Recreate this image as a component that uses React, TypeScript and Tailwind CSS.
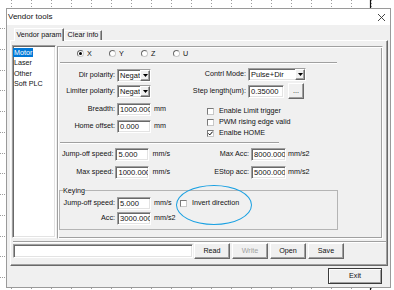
import React from 'react';

const sunken =
  'bg-white border border-t-[#a0a0a0] border-l-[#a0a0a0] border-r-white border-b-white shadow-[inset_1px_1px_0_#696969,inset_-1px_-1px_0_#e3e3e3]';
const raised =
  'bg-[#f0f0f0] border border-t-white border-l-white border-r-[#696969] border-b-[#696969] shadow-[inset_-1px_-1px_0_#a0a0a0]';

const Ruler = () => {
  const top = Array.from({ length: 19 }, (_, i) => 11 + i * 20);
  const left = Array.from({ length: 13 }, (_, i) => 28 + i * 20.75);
  return (
    <svg className="absolute inset-0 pointer-events-none" width="394" height="290">
      {top.map((x) => (
        <line key={'t' + x} x1={x + 0.5} y1="0" x2={x + 0.5} y2="7" stroke="#9c9c9c" strokeDasharray="1 2" />
      ))}
      {top.map((x) => (
        <line key={'b' + x} x1={x + 0.5} y1="288" x2={x + 0.5} y2="290" stroke="#9c9c9c" strokeDasharray="1 1" />
      ))}
      {left.map((y) => (
        <line key={'l' + y} x1="0" y1={Math.round(y) + 0.5} x2="5" y2={Math.round(y) + 0.5} stroke="#9c9c9c" strokeDasharray="1 1" />
      ))}
      <line x1="370.5" y1="0" x2="370.5" y2="8" stroke="#111" strokeWidth="1.2" />
      <line x1="370.5" y1="287" x2="370.5" y2="290" stroke="#111" strokeWidth="1.2" />
    </svg>
  );
};

const Arrow = () => (
  <svg width="5" height="3" viewBox="0 0 5 3">
    <path d="M0 0 L5 0 L2.5 3 Z" fill="#000" />
  </svg>
);

const Combo = ({ value, w }: { value: string; w: string }) => (
  <div className={`flex h-[13px] ${w} ${sunken}`}>
    <span className="flex-1 overflow-hidden whitespace-nowrap pl-[2px] leading-[11px] text-[7.5px]">{value}</span>
    <span className={`w-[10px] h-full flex items-center justify-center ${raised}`}>
      <Arrow />
    </span>
  </div>
);

const Field = ({ value, w = 'w-[34px]' }: { value: string; w?: string }) => (
  <div className={`h-[13px] ${w} ${sunken} overflow-hidden whitespace-nowrap pl-[2px] leading-[11px] text-[7.6px]`}>{value}</div>
);

const Check = ({ checked = false }: { checked?: boolean }) => (
  <span className="w-[7px] h-[7px] flex items-center justify-center bg-white border border-t-[#7a7a7a] border-l-[#7a7a7a] border-r-[#c8c8c8] border-b-[#c8c8c8]">
    {checked && (
      <svg width="5" height="5" viewBox="0 0 5 5">
        <path d="M0.3 2.4 L1.8 3.9 L4.7 0.6" stroke="#000" strokeWidth="1" fill="none" />
      </svg>
    )}
  </span>
);

const Radio = ({ label, checked = false }: { label: string; checked?: boolean }) => (
  <div className="w-[32px] flex items-center">
    <span className="w-[7px] h-[7px] rounded-full bg-white border border-t-[#6a6a6a] border-l-[#6a6a6a] border-r-[#c8c8c8] border-b-[#c8c8c8] flex items-center justify-center">
      {checked && <span className="w-[3px] h-[3px] rounded-full bg-black" />}
    </span>
    <span className="ml-[3px]">{label}</span>
  </div>
);

const Btn = ({ label, disabled = false, w = 'w-[36px]' }: { label: string; disabled?: boolean; w?: string }) => (
  <div className={`h-[16px] ${w} ${raised} flex items-center justify-center ${disabled ? 'text-[#a0a0a0]' : ''}`}>{label}</div>
);

const Etched = ({ w }: { w: string }) => (
  <div className={`ml-[2px] ${w} h-[2px] border-t border-t-[#a0a0a0] border-b border-b-white`} />
);

export default function App() {
  return (
    <div className="relative w-[394px] h-[290px] overflow-hidden bg-white font-['Liberation_Sans',Arial,sans-serif] text-[7.2px] text-[#111]">
      <Ruler />
      <div className="relative pt-[8px] pl-[6px]">
        <div className="w-[385px] h-[280px] flex flex-col bg-[#f0f0f0] border border-[#9a9a9a]">
          {/* title bar */}
          <div className="h-[16px] shrink-0 bg-white flex items-center justify-between pl-[1px] pr-[5px]">
            <span className="text-[8px]">Vendor tools</span>
            <svg width="7" height="7" viewBox="0 0 7 7">
              <path d="M0 0 L7 7 M7 0 L0 7" stroke="#333" strokeWidth="0.9" />
            </svg>
          </div>

          <div className="flex-1 flex flex-col pl-[3px] pr-[1px]">
            {/* tabs */}
            <div className="mt-[3px] h-[12px] flex items-end pl-[4px]">
              <div className="relative z-10 -mb-[1px] h-[13px] w-[50px] flex items-center justify-center bg-[#f0f0f0] border border-b-0 border-t-white border-l-white border-r-[#696969] shadow-[inset_-1px_0_0_#a0a0a0]">
                Vendor param
              </div>
              <div className="h-[10px] w-[38px] flex items-center justify-center bg-[#f0f0f0] border border-b-0 border-t-white border-l-white border-r-[#696969] shadow-[inset_-1px_0_0_#a0a0a0]">
                Clear info
              </div>
            </div>

            {/* tab panel */}
            <div className="h-[226px] w-[378px] flex flex-col border border-t-white border-l-white border-r-[#696969] border-b-[#696969] shadow-[inset_-1px_-1px_0_#a0a0a0]">
              <div className="flex items-start pt-[4px] pl-[1px]">
                {/* tree list */}
                <div className={`w-[44px] h-[193px] ${sunken} pt-[2px] pl-[0px] leading-[10.4px]`}>
                  <div>
                    <span className="bg-[#0078d7] text-white px-[1px]">Motor</span>
                  </div>
                  <div className="pl-[1px]">Laser</div>
                  <div className="pl-[1px]">Other</div>
                  <div className="pl-[1px]">Soft PLC</div>
                </div>

                {/* main group */}
                <div className="ml-[1px] mt-[1px] w-[326px] h-[193px] flex flex-col border border-t-[#a0a0a0] border-l-[#a0a0a0] border-r-white border-b-white shadow-[inset_1px_1px_0_#fff,inset_-1px_-1px_0_#a0a0a0]">
                  <div className="h-[14px] flex items-center pl-[19px]">
                    <Radio label="X" checked />
                    <Radio label="Y" />
                    <Radio label="Z" />
                    <Radio label="U" />
                  </div>
                  <div className="mt-[1px]">
                    <Etched w="w-[277px]" />
                  </div>

                  {/* upper section */}
                  <div className="h-[78px] flex">
                    <div className="w-[112px] flex flex-col">
                      <div className="mt-[5px] h-[13px] flex items-center">
                        <span className="w-[57px] text-right">Dir polarity:</span>
                        <span className="ml-[2px]">
                          <Combo value="Negat" w="w-[34px]" />
                        </span>
                      </div>
                      <div className="mt-[3px] h-[13px] flex items-center">
                        <span className="w-[57px] text-right whitespace-nowrap">Limiter polarity:</span>
                        <span className="ml-[2px]">
                          <Combo value="Negat" w="w-[34px]" />
                        </span>
                      </div>
                      <div className="mt-[5px] h-[13px] flex items-center">
                        <span className="w-[57px] text-right">Breadth:</span>
                        <span className="ml-[2px]">
                          <Field value="1000.000" />
                        </span>
                        <span className="ml-[3px]">mm</span>
                      </div>
                      <div className="mt-[4px] h-[13px] flex items-center">
                        <span className="w-[57px] text-right">Home offset:</span>
                        <span className="ml-[2px]">
                          <Field value="0.000" />
                        </span>
                        <span className="ml-[3px]">mm</span>
                      </div>
                    </div>

                    <div className="flex-1 flex flex-col">
                      <div className="mt-[4px] h-[13px] flex items-center">
                        <span className="w-[76px] text-right">Contrl Mode:</span>
                        <span className="ml-[2px]">
                          <Combo value="Pulse+Dir" w="w-[58px]" />
                        </span>
                      </div>
                      <div className="mt-[3px] h-[14px] flex items-center">
                        <span className="w-[76px] text-right whitespace-nowrap">Step length(um):</span>
                        <span className="ml-[2px]">
                          <Field value="0.35000" w="w-[36px]" />
                        </span>
                        <span className="ml-[4px]">
                          <Btn label="..." w="w-[16px]" />
                        </span>
                      </div>
                      <div className="mt-[8px] flex flex-col pl-[37px]">
                        <div className="h-[11px] flex items-center">
                          <Check />
                          <span className="ml-[5px]">Enable Limit trigger</span>
                        </div>
                        <div className="h-[11px] flex items-center">
                          <Check />
                          <span className="ml-[5px]">PWM rising edge valid</span>
                        </div>
                        <div className="h-[11px] flex items-center">
                          <Check checked />
                          <span className="ml-[5px]">Enalbe HOME</span>
                        </div>
                      </div>
                    </div>
                  </div>

                  <Etched w="w-[219px]" />

                  {/* lower section */}
                  <div className="h-[42px] flex">
                    <div className="w-[112px] flex flex-col">
                      <div className="mt-[4px] h-[13px] flex items-center">
                        <span className="w-[57px] text-right whitespace-nowrap">Jump-off speed:</span>
                        <span className="ml-[2px]">
                          <Field value="5.000" />
                        </span>
                        <span className="ml-[3px]">mm/s</span>
                      </div>
                      <div className="mt-[5px] h-[13px] flex items-center">
                        <span className="w-[57px] text-right">Max speed:</span>
                        <span className="ml-[2px]">
                          <Field value="1000.000" />
                        </span>
                        <span className="ml-[3px]">mm/s</span>
                      </div>
                    </div>
                    <div className="flex-1 flex flex-col">
                      <div className="mt-[4px] h-[13px] flex items-center">
                        <span className="w-[79px] text-right">Max Acc:</span>
                        <span className="ml-[2px]">
                          <Field value="8000.000" w="w-[35px]" />
                        </span>
                        <span className="ml-[2px]">mm/s2</span>
                      </div>
                      <div className="mt-[5px] h-[13px] flex items-center">
                        <span className="w-[79px] text-right">EStop acc:</span>
                        <span className="ml-[2px]">
                          <Field value="5000.000" w="w-[35px]" />
                        </span>
                        <span className="ml-[2px]">mm/s2</span>
                      </div>
                    </div>
                  </div>

                  {/* keying */}
                  <fieldset className="ml-[1px] w-[279px] border border-[#b4b4b4] pb-[4px]">
                    <legend className="ml-[3px] leading-[9px]">Keying</legend>
                    <div className="mt-[2px] h-[13px] flex items-center">
                      <span className="w-[55px] text-right whitespace-nowrap">Jump-off speed:</span>
                      <span className="ml-[2px]">
                        <Field value="5.000" />
                      </span>
                      <span className="ml-[3px] w-[24px]">mm/s</span>
                      <span className="ml-[2px]">
                        <Check />
                      </span>
                      <span className="ml-[5px]">Invert direction</span>
                    </div>
                    <div className="mt-[2px] h-[13px] flex items-center">
                      <span className="w-[55px] text-right">Acc:</span>
                      <span className="ml-[2px]">
                        <Field value="3000.000" />
                      </span>
                      <span className="ml-[3px]">mm/s2</span>
                    </div>
                  </fieldset>
                </div>
              </div>

              {/* bottom strip */}
              <div className="mt-[2px] ml-[2px] mr-[1px] border-t border-t-[#a0a0a0] shadow-[inset_0_1px_0_#fff]">
                <div className="pt-[1px] flex items-start">
                  <div className={`mt-[1px] w-[180px] h-[14px] ${sunken} bg-[#f0f0f0]`} />
                  <div className="ml-[1px] flex gap-[2px]">
                    <Btn label="Read" />
                    <Btn label="Write" disabled />
                    <Btn label="Open" />
                    <Btn label="Save" />
                  </div>
                </div>
              </div>
            </div>

            {/* exit */}
            <div className="mt-[2px] flex justify-end pr-[7px]">
              <div className="h-[16px] w-[54px] flex items-center justify-center bg-[#f0f0f0] border border-[#3c3c3c] shadow-[inset_1px_1px_0_#fff,inset_-1px_-1px_0_#a0a0a0]">
                Exit
              </div>
            </div>
          </div>
        </div>
      </div>

      {/* annotation ellipse */}
      <div className="absolute left-[176px] top-[185px] w-[76px] h-[40px] rounded-[50%] border-[1.5px] border-[#1ba1e2]" />
    </div>
  );
}
